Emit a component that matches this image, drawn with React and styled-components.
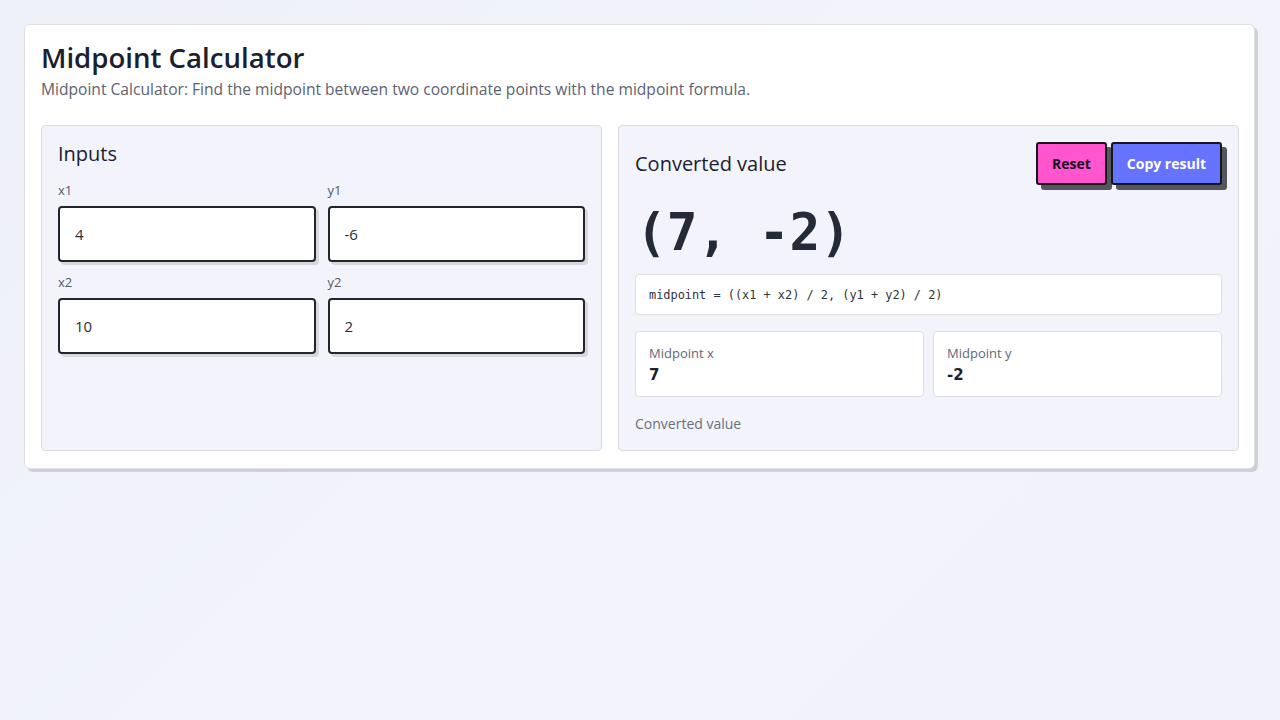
import React from "react";
import styled, { createGlobalStyle } from "styled-components";

const Global = createGlobalStyle`
  html, body { margin: 0; padding: 0; }
  body {
    min-height: 720px;
    background: linear-gradient(135deg, #eef0f8 0%, #f3f4fb 50%, #f1f2fa 100%);
    font-family: "Open Sans", "Noto Sans", sans-serif;
    color: #1d2230;
  }
  * { box-sizing: border-box; }
`;

const Page = styled.div`
  padding: 24px;
`;

const Card = styled.div`
  width: 1231px;
  background: #ffffff;
  border: 1px solid #dcdfe6;
  border-radius: 6px;
  box-shadow: 3px 3px 0 #cfd1d6;
  padding: 16px 16px 17px 16px;
`;

const Title = styled.h1`
  margin: 0;
  font-size: 27.6px;
  font-weight: 600;
  line-height: 32px;
  color: #1b2030;
`;

const Subtitle = styled.p`
  margin: 6px 0 0 0;
  font-size: 15.6px;
  line-height: 20px;
  color: #5d6270;
`;

const Columns = styled.div`
  display: grid;
  grid-template-columns: 561px 621px;
  gap: 16px;
  margin-top: 26px;
`;

const Panel = styled.section`
  background: #f3f4fb;
  border: 1px solid #d9dbe2;
  border-radius: 4px;
  padding: 16px;
  height: 326px;
`;

const PanelTitle = styled.h2`
  margin: 0;
  font-size: 20px;
  font-weight: 500;
  line-height: 24px;
  color: #1b2030;
`;

const InputGrid = styled.div`
  display: grid;
  grid-template-columns: 1fr 1fr;
  column-gap: 12px;
  row-gap: 12px;
  margin-top: 16px;
`;

const Field = styled.label`
  display: flex;
  flex-direction: column;
  gap: 8px;
`;

const FieldLabel = styled.span`
  font-size: 13px;
  line-height: 16px;
  color: #555a66;
`;

const Input = styled.input`
  height: 56px;
  width: 100%;
  border: 2px solid #23252b;
  border-radius: 4px;
  background: #ffffff;
  box-shadow: 3px 3px 0 #d6d8de;
  padding: 0 15px;
  font-family: "Open Sans", "Noto Sans", sans-serif;
  font-size: 15px;
  color: #2a2e38;
  outline: none;
`;

const ResultHead = styled.div`
  display: flex;
  align-items: center;
  justify-content: space-between;
`;

const ButtonRow = styled.div`
  display: flex;
  gap: 4px;
`;

const Button = styled.button`
  height: 43px;
  padding: 0 14px;
  border: 2px solid #15161a;
  border-radius: 3px;
  background: ${(p) => p.$bg};
  color: ${(p) => p.$fg};
  box-shadow: 5px 5px 0 #55575e;
  font-family: "Open Sans", "Noto Sans", sans-serif;
  font-size: 14px;
  font-weight: 700;
  cursor: pointer;
`;

const BigValue = styled.div`
  font-family: "DejaVu Sans Mono", monospace;
  font-weight: 700;
  font-size: 51px;
  line-height: 60px;
  margin-top: 18px;
  color: #252a36;
  padding-left: 1px;
  white-space: pre;
`;

const Formula = styled.div`
  margin-top: 11px;
  background: #ffffff;
  border: 1px solid #dcdfe6;
  border-radius: 4px;
  height: 41px;
  display: flex;
  align-items: center;
  padding: 0 13px;
  font-family: "DejaVu Sans Mono", monospace;
  font-size: 11.9px;
  color: #2f333d;
  white-space: pre;
`;

const Stats = styled.div`
  display: grid;
  grid-template-columns: 1fr 1fr;
  gap: 9px;
  margin-top: 16px;
`;

const Stat = styled.div`
  background: #ffffff;
  border: 1px solid #dcdfe6;
  border-radius: 4px;
  height: 66px;
  padding: 13px 13px;
  display: flex;
  flex-direction: column;
  gap: 5px;
`;

const StatLabel = styled.span`
  font-size: 13px;
  line-height: 16px;
  color: #636875;
`;

const StatValue = styled.span`
  font-family: "DejaVu Sans", sans-serif;
  font-size: 15px;
  font-weight: 700;
  line-height: 18px;
  color: #1d2230;
`;

const Note = styled.p`
  margin: 18px 0 0 0;
  font-size: 14px;
  line-height: 18px;
  color: #6a6f7b;
`;

export default function App() {
  return (
    <>
      <Global />
      <Page>
        <Card>
          <Title>Midpoint Calculator</Title>
          <Subtitle>
            Midpoint Calculator: Find the midpoint between two coordinate points with the midpoint formula.
          </Subtitle>
          <Columns>
            <Panel>
              <PanelTitle>Inputs</PanelTitle>
              <InputGrid>
                <Field>
                  <FieldLabel>x1</FieldLabel>
                  <Input defaultValue="4" />
                </Field>
                <Field>
                  <FieldLabel>y1</FieldLabel>
                  <Input defaultValue="-6" />
                </Field>
                <Field>
                  <FieldLabel>x2</FieldLabel>
                  <Input defaultValue="10" />
                </Field>
                <Field>
                  <FieldLabel>y2</FieldLabel>
                  <Input defaultValue="2" />
                </Field>
              </InputGrid>
            </Panel>
            <Panel>
              <ResultHead>
                <PanelTitle>Converted value</PanelTitle>
                <ButtonRow>
                  <Button $bg="#ff55cf" $fg="#1a1020">Reset</Button>
                  <Button $bg="#6673ff" $fg="#ffffff">Copy result</Button>
                </ButtonRow>
              </ResultHead>
              <BigValue>(7, -2)</BigValue>
              <Formula>midpoint = ((x1 + x2) / 2, (y1 + y2) / 2)</Formula>
              <Stats>
                <Stat>
                  <StatLabel>Midpoint x</StatLabel>
                  <StatValue>7</StatValue>
                </Stat>
                <Stat>
                  <StatLabel>Midpoint y</StatLabel>
                  <StatValue>-2</StatValue>
                </Stat>
              </Stats>
              <Note>Converted value</Note>
            </Panel>
          </Columns>
        </Card>
      </Page>
    </>
  );
}
